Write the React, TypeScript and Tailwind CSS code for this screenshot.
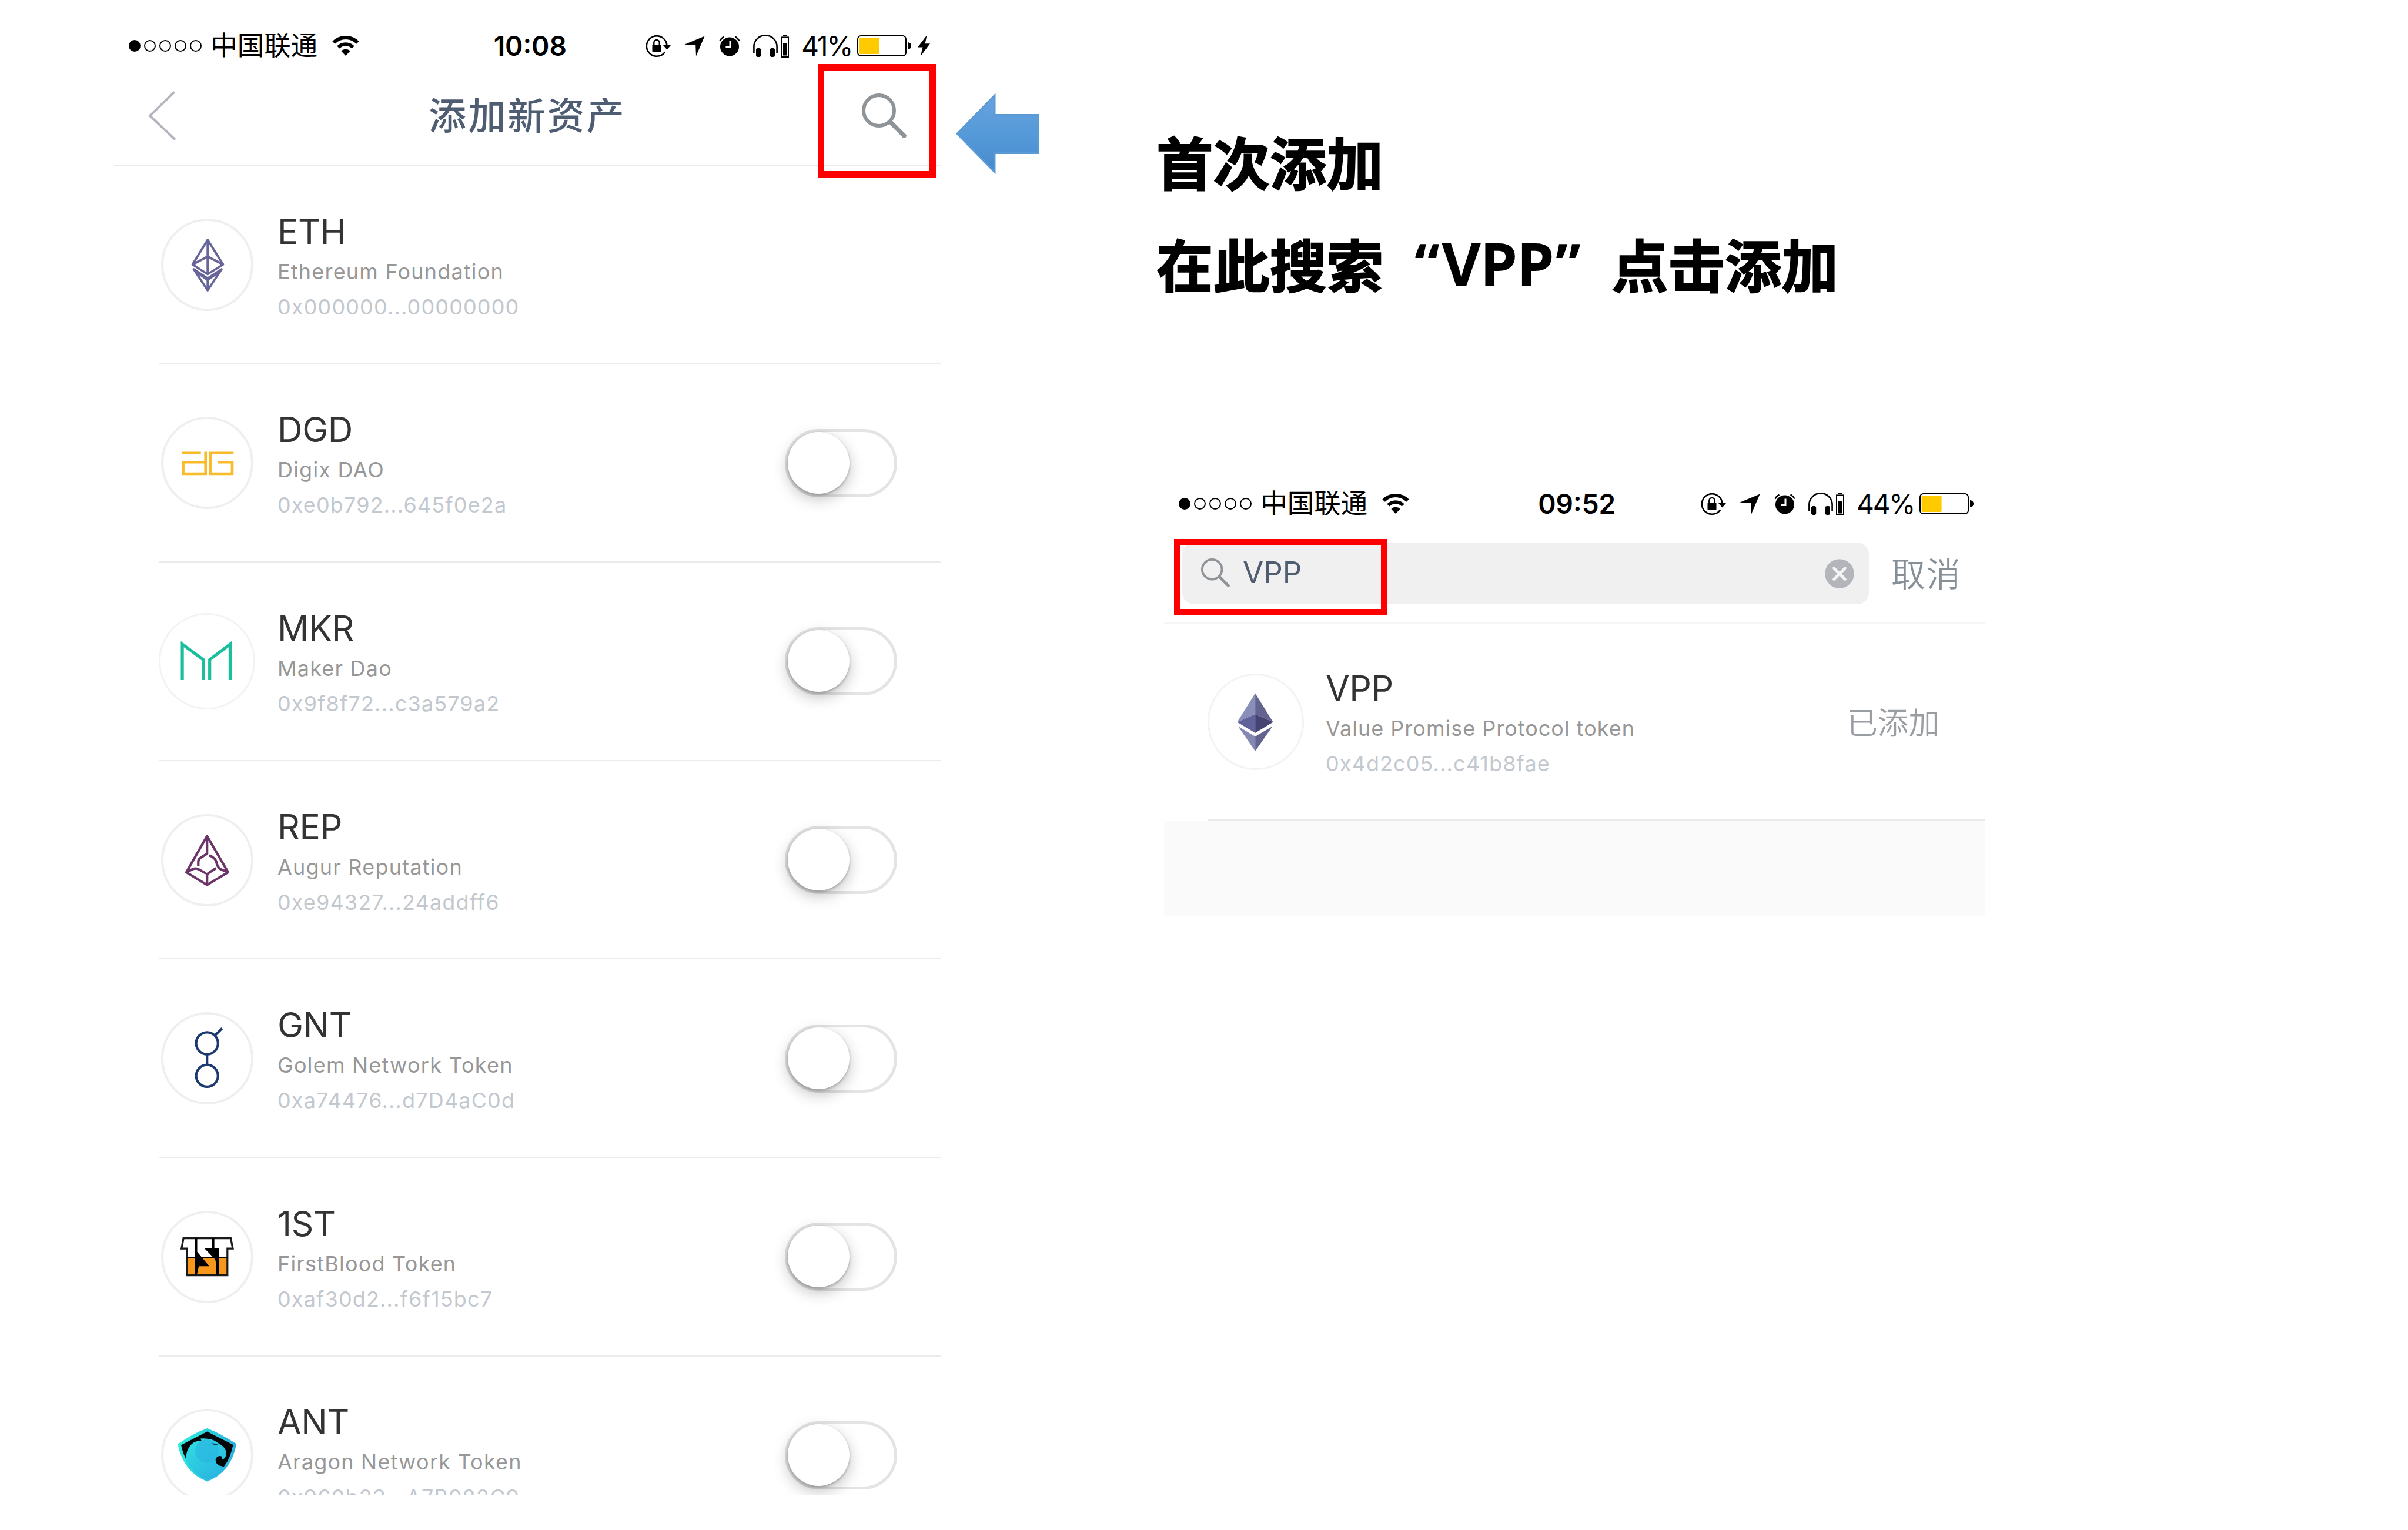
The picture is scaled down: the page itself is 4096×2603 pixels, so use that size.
import React from "react";

const LATIN = "font-['Inter','Noto_Sans_CJK_SC',sans-serif]";

/* ---------- status bar ---------- */

function Wifi() {
  return (
    <svg className="h-[34px] w-[46px]" viewBox="0 0 46 34" fill="none">
      <path d="M2.6 11.6A28.5 28.5 0 0 1 43.4 11.6" stroke="#000" strokeWidth="6.2" />
      <path d="M10.4 19.6A17.5 17.5 0 0 1 35.6 19.6" stroke="#000" strokeWidth="5.8" />
      <path d="M23 34L15.4 26A10.6 10.6 0 0 1 30.6 26Z" fill="#000" />
    </svg>
  );
}

function RotationLock() {
  return (
    <svg className="h-[39px] w-[43px]" viewBox="0 0 43 39" fill="none">
      <path d="M33.2 29.5A17.3 17.3 0 1 1 36.4 19" stroke="#000" strokeWidth="2.6" />
      <path d="M30 18H43L36.6 25.5Z" fill="#000" />
      <rect x="11.5" y="17.5" width="15" height="12" rx="1" fill="#000" />
      <path d="M14.3 18V13.6A4.7 4.7 0 0 1 23.7 13.6V18" stroke="#000" strokeWidth="2.4" />
    </svg>
  );
}

function LocationArrow() {
  return (
    <svg className="h-[35px] w-[35px]" viewBox="0 0 35 35">
      <path d="M34.6 0.4L20 34.6L19.2 15.8L0.4 14.8Z" fill="#000" />
    </svg>
  );
}

function Alarm() {
  return (
    <svg className="h-[35px] w-[36px]" viewBox="0 0 36 35" fill="none">
      <circle cx="18" cy="18.4" r="16" fill="#000" />
      <path d="M1.4 8.6A20 20 0 0 1 8.4 1.4M34.6 8.6A20 20 0 0 0 27.6 1.4" stroke="#000" strokeWidth="2.4" />
      <path d="M19 8.6V19.4H11.4" stroke="#fff" strokeWidth="3" />
    </svg>
  );
}

function Headphones() {
  return (
    <svg className="h-[38px] w-[42px]" viewBox="0 0 42 38" fill="none">
      <path d="M1.4 31V20.6A19.6 19.4 0 0 1 40.6 20.6V31" stroke="#000" strokeWidth="2.6" />
      <rect x="5" y="23" width="8.2" height="15" rx="3" fill="#000" />
      <rect x="28.8" y="23" width="8.2" height="15" rx="3" fill="#000" />
    </svg>
  );
}

function HeadphoneBattery() {
  return (
    <svg className="h-[39px] w-[14px]" viewBox="0 0 14 39" fill="none">
      <rect x="4" y="0" width="6" height="2" fill="#000" />
      <rect x="1" y="4.4" width="12" height="33.6" stroke="#000" strokeWidth="2" />
      <rect x="4" y="15" width="6" height="20.5" fill="#000" />
    </svg>
  );
}

function Battery() {
  return (
    <svg className="h-[36px] w-[92px]" viewBox="0 0 92 36" fill="none">
      <rect x="1" y="1" width="82" height="34" rx="5.5" stroke="#000" strokeWidth="2" />
      <rect x="3.6" y="4" width="34" height="28" rx="2" fill="#ffca00" />
      <path d="M86 12C90.5 12.5 92 15 92 18S90.5 23.5 86 24Z" fill="#000" />
    </svg>
  );
}

function Bolt() {
  return (
    <svg className="h-[36px] w-[21px]" viewBox="0 0 21 36">
      <path d="M15.6 0L0 20.5H8.6L4.6 36L21 14.2H12.6Z" fill="#000" />
    </svg>
  );
}

function StatusBar({ time, level, charging }: { time: string; level: string; charging?: boolean }) {
  return (
    <div className={`${LATIN} flex h-[60px] w-full items-center text-black`}>
      <div className="flex flex-1 items-center pl-[24.5px]">
        <div className="flex gap-[6.2px]">
          <span className="size-[20px] rounded-full bg-black" />
          <span className="size-[20px] rounded-full border-2 border-black" />
          <span className="size-[20px] rounded-full border-2 border-black" />
          <span className="size-[20px] rounded-full border-2 border-black" />
          <span className="size-[20px] rounded-full border-2 border-black" />
        </div>
        <span className="ml-[15px] text-[45.5px] leading-[60px] whitespace-nowrap">中国联通</span>
        <span className="ml-[25px]">
          <Wifi />
        </span>
      </div>
      <div className="pl-[3px] text-[46px] leading-[60px] font-semibold">{time}</div>
      <div className="flex flex-1 items-center justify-end pr-[19px]">
        <RotationLock />
        <span className="ml-[23px]"><LocationArrow /></span>
        <span className="ml-[24px]"><Alarm /></span>
        <span className="ml-[22px]"><Headphones /></span>
        <span className="ml-[5px]"><HeadphoneBattery /></span>
        <span className="ml-[21px] pr-[9px] text-[46px] leading-[60px] tracking-[-2.3px]">{level}</span>
        <Battery />
        {charging && <span className="ml-[11px]"><Bolt /></span>}
      </div>
    </div>
  );
}

/* ---------- token logos, drawn in a 157-unit circle ---------- */

function EthOutline() {
  return (
    <svg className="size-[157px]" viewBox="0 0 157 157" fill="none" stroke="#67649a" strokeWidth="3.8" strokeLinejoin="round">
      <path d="M79.2 36L53.5 78L79.2 94.500L105.500 78Z" />
      <path d="M53.5 78L79.2 64.500L105.500 78M79.200 36V94" />
      <path d="M55.5 86L79.200 122L103 86L79.200 101.500Z" />
      <path d="M58.5 89.500L79.200 104.500L100 89.500M79.200 102V121" />
    </svg>
  );
}

function Digix() {
  return (
    <svg className="size-[157px]" viewBox="0 0 157 157" fill="none" stroke="#fabb2b" strokeWidth="4.6">
      <path d="M35.4 61.7H67.8M75.7 59.5V97H37.6V77.2H75.7" />
      <path d="M123.3 61.7H83.8V97H121V77.2H96.7" />
    </svg>
  );
}

function Maker() {
  return (
    <svg className="size-[164px]" viewBox="0 0 164 164" fill="none" stroke="#1bbf9c" strokeWidth="5.2">
      <path d="M40.1 114V53L75.9 79.3V114M86.7 114V79.3L121.4 53V114" />
    </svg>
  );
}

function Augur() {
  return (
    <svg className="size-[157px]" viewBox="0 0 157 157" fill="none" stroke="#6b3569" strokeWidth="4.2" strokeLinejoin="round">
      <path d="M78.2 37.5L43 99L78.2 120.5L114 99Z" />
      <path d="M78.2 37.5V67.5L67 74.5Q63.3 77 63.3 81V88" />
      <path d="M81 70.5Q86 71 91.5 76.5Q93.5 79 95 85Q97 92.5 103 94.5L114 99" />
      <path d="M43 99L52 94.5Q58.5 91 64 94L76.3 101" />
      <path d="M93.5 92L80.5 100.5Q78.2 102 78.2 105V120.5" />
    </svg>
  );
}

function Golem() {
  return (
    <svg className="size-[157px]" viewBox="0 0 157 157" fill="none" stroke="#1c3a70" strokeWidth="4.2">
      <circle cx="78.2" cy="53" r="18.6" />
      <circle cx="78.2" cy="108.3" r="18.6" />
      <path d="M78.2 71.5V90M91.3 40L103.8 27.5" />
    </svg>
  );
}

function FirstBlood() {
  return (
    <svg className="size-[157px]" viewBox="0 0 157 157">
      <path d="M44.5 79.5H112.5V109H44.5Z" fill="#f7981d" />
      <path d="M38.1 46.6H118.5L122 64.2H112.8V109.6H44.1V64.2H34.8Z" fill="none" stroke="#1a1a1a" strokeWidth="3.2" />
      <path d="M44 78H113V81H44Z" />
      <path d="M57.2 46H61.5V69.8L82 94.3H64.2L60.7 109.6H57.2Z" />
      <path d="M86.2 46H90.6V63.6H98.9V109.6H93V88Q93 83 89.5 80L73.4 63.6H86.2Z" />
    </svg>
  );
}

function Aragon() {
  return (
    <svg className="size-[157px]" viewBox="0 0 157 157">
      <defs>
        <linearGradient id="aragon-shell" x1="0" y1="0.3" x2="1" y2="0.5">
          <stop offset="0" stopColor="#2ff0dc" />
          <stop offset="1" stopColor="#2ba9e0" />
        </linearGradient>
        <linearGradient id="aragon-body" x1="0.1" y1="0" x2="0.8" y2="1">
          <stop offset="0" stopColor="#2ee6e0" />
          <stop offset="1" stopColor="#2bb0e2" />
        </linearGradient>
      </defs>
      <path d="M78.5 32.9Q100 41 128.3 59.6Q119 108 78.5 123.5Q38 108 28.3 60Q55 41 78.5 32.9Z" fill="url(#aragon-shell)" />
      <path d="M78.5 38.5Q99 45 122.5 61Q119 106 78.5 121.5Q42 106 34.1 61.6Q56 45 78.5 38.5Z" fill="url(#aragon-body)" />
      <circle cx="78" cy="72" r="20" fill="#2bb4e2" fillOpacity="0.65" />
      <path d="M78.5 38.5L34.1 61.6Q37 76 42.2 84.5Q43 66 55 57.5Q60 54 68.8 54.5L67 50.5Q80 49.5 90.8 54L101.2 60.8Q110 66 110.8 75Q111 82 106 85.5Q103.5 86.5 103.5 81Q98 78.5 94 83Q91 88 95 93.5Q100 98 107 97.9Q118 84 122.5 61Z" fill="#05080a" />
      <path d="M86.5 58.3L97 60L93 62.3Q90 62 86.5 58.3Z" fill="#0b3a4a" />
    </svg>
  );
}

function EthSolid() {
  return (
    <svg className="size-[164px]" viewBox="0 0 164 164">
      <path d="M81.1 33.5L50.4 82.5L81.1 69.1Z" fill="#8a8fba" />
      <path d="M81.1 33.5L111.5 82.5L81.1 69.1Z" fill="#62638f" />
      <path d="M81.1 69.1L50.4 82.5L81.1 101Z" fill="#62629a" />
      <path d="M81.1 69.1L111.5 82.5L81.1 101Z" fill="#454374" />
      <path d="M52 89.8L81.1 106.9V131.9Z" fill="#8488b3" />
      <path d="M110.5 89.8L81.1 106.9V131.9Z" fill="#62638f" />
    </svg>
  );
}

/* ---------- shared pieces ---------- */

function Toggle() {
  return (
    <div className="h-[116px] w-[191px] rounded-full border-[5.5px] border-[#e4e4e4] bg-white">
      <div className="size-[105px] rounded-full bg-white shadow-[0_2px_4px_rgba(0,0,0,0.28),0_9px_26px_rgba(0,0,0,0.24)]" />
    </div>
  );
}

function Magnifier({ className, stroke }: { className: string; stroke: number }) {
  return (
    <svg className={className} viewBox="0 0 76 76" fill="none" stroke="#8f9499">
      <circle cx="29" cy="29" r="26" strokeWidth={stroke} />
      <path d="M48.5 48.5L72 72" strokeWidth="7.5" strokeLinecap="round" />
    </svg>
  );
}

function Labels({ symbol, name, address, tight }: { symbol: string; name: string; address: string; tight?: boolean }) {
  return (
    <div className={`${LATIN} flex flex-1 flex-col whitespace-nowrap`}>
      <span className="text-[59px] leading-[70px] tracking-[-0.4px] text-[#333]">{symbol}</span>
      <span
        className={`mt-[3px] text-[36px] leading-[60px] text-[#979797] ${tight ? "tracking-[1px]" : "tracking-[1.2px]"}`}
      >
        {name}
      </span>
      <span className={`text-[36px] leading-[60px] text-[#c2c8ce] ${tight ? "tracking-[1.1px]" : "tracking-[1.15px]"}`}>
        {address}
      </span>
    </div>
  );
}

type Token = { symbol: string; name: string; address: string; logo: React.ReactNode; wide?: boolean; fixed?: boolean };

const TOKENS: Token[] = [
  { symbol: "ETH", name: "Ethereum Foundation", address: "0x000000...00000000", logo: <EthOutline />, fixed: true },
  { symbol: "DGD", name: "Digix DAO", address: "0xe0b792...645f0e2a", logo: <Digix /> },
  { symbol: "MKR", name: "Maker Dao", address: "0x9f8f72...c3a579a2", logo: <Maker />, wide: true },
  { symbol: "REP", name: "Augur Reputation", address: "0xe94327...24addff6", logo: <Augur /> },
  { symbol: "GNT", name: "Golem Network Token", address: "0xa74476...d7D4aC0d", logo: <Golem /> },
  { symbol: "1ST", name: "FirstBlood Token", address: "0xaf30d2...f6f15bc7", logo: <FirstBlood /> },
  { symbol: "ANT", name: "Aragon Network Token", address: "0x960b23...A7B982C9", logo: <Aragon /> },
];

function Ring({ wide, children }: { wide?: boolean; children: React.ReactNode }) {
  return (
    <div className="flex w-[164px] shrink-0 justify-center">
      <div
        className={
          wide
            ? "flex size-[164px] items-center justify-center rounded-full border-[3px] border-[#f3f3f3]"
            : "flex size-[157px] items-center justify-center rounded-full border-[4px] border-[#efefef]"
        }
      >
        <div className="shrink-0">{children}</div>
      </div>
    </div>
  );
}

function TokenRow({ token }: { token: Token }) {
  return (
    <div className="ml-[76px] flex h-[337.6px] shrink-0 items-center border-b-[2px] border-[#ebebeb] pt-[1px] pr-[75px]">
      <Ring wide={token.wide}>{token.logo}</Ring>
      <div className="ml-[38px] flex flex-1 pt-[10px]">
        <Labels symbol={token.symbol} name={token.name} address={token.address} />
      </div>
      {!token.fixed && <Toggle />}
    </div>
  );
}

/* ---------- screens ---------- */

function AddAssetScreen() {
  return (
    <section className="flex h-[2543px] w-[1407px] shrink-0 flex-col overflow-hidden pt-[48px]">
      <StatusBar time="10:08" level="41%" charging />
      <header className="relative flex h-[174px] shrink-0 items-center justify-between border-b-[2px] border-[#ebebeb] pt-[6px] pr-[59px] pl-[58px]">
        <svg className="h-[84px] w-[76px]" viewBox="0 0 76 84" fill="none">
          <path d="M44.5 1.5L3 42L46 82.5" stroke="#b3b6be" strokeWidth="4" />
        </svg>
        <h1 className="font-['Inter','Noto_Sans_CJK_SC',sans-serif] text-[64px] leading-[90px] font-medium tracking-[3.2px] text-[#4f5d72]">
          添加新资产
        </h1>
        <Magnifier className="size-[76px]" stroke={6} />
        <div className="absolute top-[0.5px] right-[9px] h-[193px] w-[201px] border-[11px] border-[#ff0000]" />
      </header>
      {TOKENS.map((t) => (
        <TokenRow key={t.symbol} token={t} />
      ))}
    </section>
  );
}

function SearchScreen() {
  return (
    <section className="ml-[13px] flex w-[1396px] flex-col">
      <StatusBar time="09:52" level="44%" />
      <header className="relative flex h-[174px] items-start border-b-[3px] border-[#f5f5f5] pt-[36px] pl-[31px]">
        <div className="flex h-[105px] w-[1168px] items-center rounded-[20px] bg-[#f0f0f0] pr-[25px] pl-[32px]">
          <Magnifier className="mb-[3px] size-[49px]" stroke={6} />
          <span className={`${LATIN} mb-[4px] ml-[22px] flex-1 text-[51px] leading-[60px] text-[#505c70]`}>VPP</span>
          <svg className="size-[50px]" viewBox="0 0 50 50">
            <circle cx="25" cy="25" r="24.8" fill="#b4b5ba" />
            <path d="M15.5 15.5L34.5 34.5M34.5 15.5L15.5 34.5" stroke="#f4f4f4" strokeWidth="4.6" strokeLinecap="round" />
          </svg>
        </div>
        <span className="ml-[38px] font-['Noto_Sans_CJK_SC',sans-serif] text-[58px] leading-[101px] font-[350] tracking-[2px] whitespace-nowrap text-[#868e96]">
          取消
        </span>
        <div className="absolute top-[30px] left-[17px] h-[130px] w-[363px] border-[11px] border-[#ff0000]" />
      </header>
      <div className="ml-[74px] flex h-[335px] items-center border-b-[2px] border-[#e9e9e9] pr-[77px]">
        <Ring wide>
          <EthSolid />
        </Ring>
        <div className="ml-[37px] flex flex-1 pt-[10px]">
          <Labels symbol="VPP" name="Value Promise Protocol token" address="0x4d2c05...c41b8fae" tight />
        </div>
        <span className="mb-[3px] font-['Noto_Sans_CJK_SC',sans-serif] text-[52.6px] leading-[80px] font-[350] whitespace-nowrap text-[#9a9ea3]">
          已添加
        </span>
      </div>
      <div className="h-[162px] bg-[#fafafa]" />
    </section>
  );
}

export default function App() {
  return (
    <main className="flex h-[2603px] w-[4096px] items-start overflow-hidden bg-white pl-[194px]">
      <AddAssetScreen />
      <svg className="mt-[159px] ml-[25px] h-[137px] w-[142px] shrink-0" viewBox="0 0 142 137">
        <defs>
          <linearGradient id="callout" x1="0" y1="0" x2="0" y2="1">
            <stop offset="0" stopColor="#68a2de" />
            <stop offset="0.5" stopColor="#559ad9" />
            <stop offset="1" stopColor="#478acd" />
          </linearGradient>
        </defs>
        <path d="M2 68.5L66 3V36.5H140V101.5H66V134Z" fill="url(#callout)" stroke="#5b9bd5" strokeWidth="3" />
      </svg>
      <div className="ml-[199px] flex flex-col pt-[187px]">
        <div className="h-[640px] font-['Noto_Sans_CJK_SC',sans-serif] text-[96.5px] leading-[173.5px] font-bold whitespace-nowrap text-black [-webkit-text-stroke:2px_black]">
          <p>首次添加</p>
          <p className="flex">
            <span>在此搜索</span>
            <span className="w-[96px] text-right font-['Noto_Sans',sans-serif] [-webkit-text-stroke:0px]">“</span>
            <span className="w-[197px] text-center font-['Noto_Sans',sans-serif] text-[102px] tracking-[-1px] [-webkit-text-stroke:0px]">VPP</span>
            <span className="w-[95px] font-['Noto_Sans',sans-serif] [-webkit-text-stroke:0px]">”</span>
            <span>点击添加</span>
          </p>
        </div>
        <SearchScreen />
      </div>
    </main>
  );
}
